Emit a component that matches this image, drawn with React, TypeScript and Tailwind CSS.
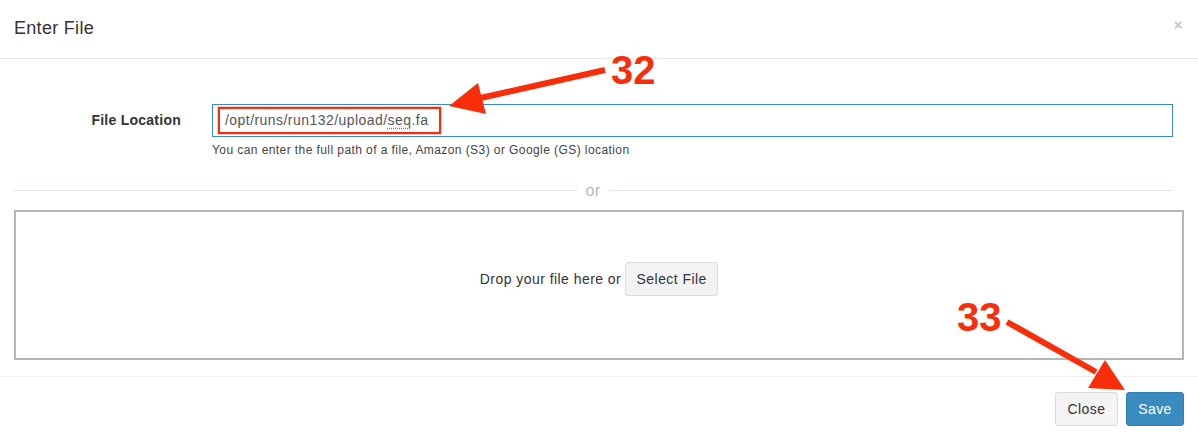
import React from "react";

export default function App() {
  return (
    <div
      className="relative w-[1198px] h-[439px] bg-white overflow-hidden text-[#333] tracking-[0.45px]"
      style={{ fontFamily: '"Liberation Sans", Arial, sans-serif' }}
    >
      {/* Header */}
      <div className="h-[59px] px-[14px] flex items-center justify-between border-b border-[#e5e5e5]">
        <h4 className="text-[18px] text-[#333] leading-none -mt-[2px] tracking-[0.3px]">Enter File</h4>
        <span className="text-[#c4c4c4] text-[15px] font-bold leading-none mr-[1px] -mt-[9px]">×</span>
      </div>

      {/* Body */}
      <div className="px-[14px] pt-[45px]">
        <div className="flex items-center">
          <label className="w-[167px] text-right text-[14px] font-bold text-[#333] tracking-[0.25px]">File Location</label>
          <div className="ml-[31px] w-[961px] h-[33px] border border-[#3a8bc4] flex items-center pl-[12px] text-[14px] text-[#555]">
            <span>
              /opt/runs/run132/upload/
              <span className="underline decoration-dotted decoration-[#e05050] underline-offset-[3px]">seq</span>.fa
            </span>
          </div>
        </div>
        <div className="ml-[198px] mt-[5px] text-[12px] leading-[17px] text-[#444] tracking-[0.42px]">
          You can enter the full path of a file, Amazon (S3) or Google (GS) location
        </div>

        {/* Divider */}
        <div className="mt-[21px] h-[20px] flex items-center w-[1158px]">
          <div className="flex-1 h-px bg-[#dfe3e8]" />
          <span className="px-[8px] text-[16px] text-[#b3b9c0] leading-none mt-[1px]">or</span>
          <div className="flex-1 h-px bg-[#dfe3e8]" />
        </div>

        {/* Drop zone */}
        <div className="mt-[10px] h-[150px] w-[1170px] border-2 border-[#b5b5b5] flex items-center justify-center pb-[12px]">
          <span className="text-[14px] text-[#333] mr-[4px]">Drop your file here or</span>
          <button className="h-[34px] w-[93px] bg-[#f3f3f3] border border-[#dcdcdc] rounded-[3px] text-[14px] text-[#333]">
            Select File
          </button>
        </div>
      </div>

      {/* Footer */}
      <div className="mt-[16px] border-t border-[#eeeeee] pt-[15px] px-[14px] flex justify-end gap-[8px]">
        <button className="h-[34px] w-[63px] bg-[#f4f4f4] border border-[#dadada] rounded-[3px] text-[14px] text-[#333]">
          Close
        </button>
        <button className="h-[34px] w-[58px] bg-[#3a8bbf] border border-[#2f7fb3] rounded-[3px] text-[14px] text-white">
          Save
        </button>
      </div>

      {/* Annotations */}
      <div className="absolute left-[218px] top-[107px] w-[223px] h-[27px] border-2 border-[#f52d0c] shadow-[0_0_0_1px_rgba(245,45,12,0.25)] pointer-events-none" />
      <svg className="absolute inset-0 pointer-events-none" width="1198" height="439">
        <line x1="605" y1="70" x2="476" y2="99" stroke="#f82e0a" strokeWidth="6" strokeLinecap="butt" />
        <polygon points="449,106 478,83 486,114" fill="#f82e0a" />
        <line x1="1007" y1="322" x2="1096" y2="372" stroke="#f82e0a" strokeWidth="6" strokeLinecap="butt" />
        <polygon points="1125,390 1088,388 1105,360" fill="#f82e0a" />
      </svg>
      <div className="absolute left-[611px] top-[50px] text-[40px] leading-[40px] font-bold text-[#f82e0a] tracking-normal">32</div>
      <div className="absolute left-[957px] top-[297px] text-[40px] leading-[40px] font-bold text-[#f82e0a] tracking-normal">33</div>
    </div>
  );
}
